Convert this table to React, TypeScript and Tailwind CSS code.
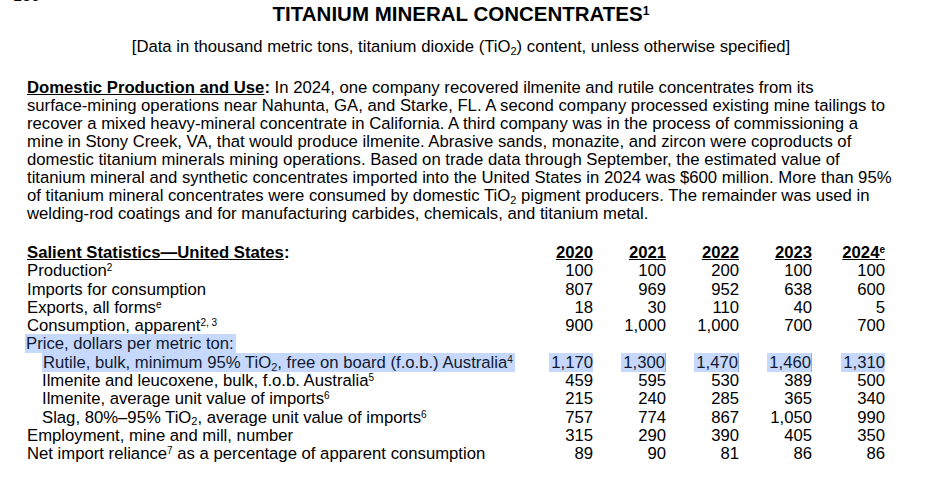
import React from 'react';

const years = ['2020', '2021', '2022', '2023', '2024'];

type Row = {
  label: React.ReactNode;
  values: string[];
  indent?: boolean;
  highlight?: boolean;
};

const rows: Row[] = [
  { label: <>Production<sup className="text-[10px]">2</sup></>, values: ['100', '100', '200', '100', '100'] },
  { label: 'Imports for consumption', values: ['807', '969', '952', '638', '600'] },
  { label: <>Exports, all forms<sup className="text-[10px]">e</sup></>, values: ['18', '30', '110', '40', '5'] },
  { label: <>Consumption, apparent<sup className="text-[10px]">2, 3</sup></>, values: ['900', '1,000', '1,000', '700', '700'] },
];

const priceRows: Row[] = [
  {
    label: (
      <>
        Rutile, bulk, minimum 95% TiO<sub className="text-[11px]">2</sub>, free on board (f.o.b.) Australia
        <sup className="text-[10px]">4</sup>
      </>
    ),
    values: ['1,170', '1,300', '1,470', '1,460', '1,310'],
    indent: true,
    highlight: true,
  },
  {
    label: <>Ilmenite and leucoxene, bulk, f.o.b. Australia<sup className="text-[10px]">5</sup></>,
    values: ['459', '595', '530', '389', '500'],
    indent: true,
  },
  {
    label: <>Ilmenite, average unit value of imports<sup className="text-[10px]">6</sup></>,
    values: ['215', '240', '285', '365', '340'],
    indent: true,
  },
  {
    label: (
      <>
        Slag, 80%–95% TiO<sub className="text-[11px]">2</sub>, average unit value of imports
        <sup className="text-[10px]">6</sup>
      </>
    ),
    values: ['757', '774', '867', '1,050', '990'],
    indent: true,
  },
  { label: 'Employment, mine and mill, number', values: ['315', '290', '390', '405', '350'] },
  {
    label: <>Net import reliance<sup className="text-[10px]">7</sup> as a percentage of apparent consumption</>,
    values: ['89', '90', '81', '86', '86'],
  },
];

const paragraph = [
  ' In 2024, one company recovered ilmenite and rutile concentrates from its',
  'surface-mining operations near Nahunta, GA, and Starke, FL. A second company processed existing mine tailings to',
  'recover a mixed heavy-mineral concentrate in California. A third company was in the process of commissioning a',
  'mine in Stony Creek, VA, that would produce ilmenite. Abrasive sands, monazite, and zircon were coproducts of',
  'domestic titanium minerals mining operations. Based on trade data through September, the estimated value of',
  'titanium mineral and synthetic concentrates imported into the United States in 2024 was $600 million. More than 95%',
];

function StatRow({ row }: { row: Row }) {
  return (
    <div className="grid grid-cols-[493px_73px_73px_73px_73px_73px] h-[18.3px]">
      <div className={row.indent ? 'pl-[15px] whitespace-nowrap' : 'whitespace-nowrap'}>
        {row.highlight ? (
          <span className="bg-[#c6d8fb] text-[#101a33] pl-[1px] pr-[2px]">{row.label}</span>
        ) : (
          row.label
        )}
      </div>
      {row.values.map((v, i) => (
        <div key={i} className="text-right">
          {row.highlight ? (
            <span
              className={
                i > 0 && i < 4
                  ? 'bg-[#c6d8fb] text-[#101a33] pl-[2px] border-r border-[#8eaef0]'
                  : 'bg-[#c6d8fb] text-[#101a33] pl-[2px]'
              }
            >
              {v}
            </span>
          ) : (
            v
          )}
        </div>
      ))}
    </div>
  );
}

export default function App() {
  return (
    <div
      className="w-[938px] h-[477px] overflow-hidden bg-white text-black"
      style={{ fontFamily: '"Liberation Sans", Arial, sans-serif' }}
    >
      <div className="-mt-[12px] ml-[13px] text-[16px] leading-[16px]">186</div>

      <div className="ml-[27px] w-[868px]">
        <h1 className="text-center text-[20.5px] font-bold leading-[22px] mt-[-1px]">
          TITANIUM MINERAL CONCENTRATES<sup className="text-[12px]">1</sup>
        </h1>

        <p className="text-center text-[16.7px] leading-[18px] mt-[13px]">
          [Data in thousand metric tons, titanium dioxide (TiO<sub className="text-[11px]">2</sub>) content, unless
          otherwise specified]
        </p>

        <div className="mt-[23px] text-[16.7px] leading-[18px] whitespace-nowrap">
          <div>
            <span className="font-bold underline">Domestic Production and Use</span>
            <span className="font-bold">:</span>
            {paragraph[0]}
          </div>
          {paragraph.slice(1).map((line, i) => (
            <div key={i}>{line}</div>
          ))}
          <div>
            of titanium mineral concentrates were consumed by domestic TiO<sub className="text-[11px]">2</sub> pigment
            producers. The remainder was used in
          </div>
          <div>welding-rod coatings and for manufacturing carbides, chemicals, and titanium metal.</div>
        </div>

        <div className="mt-[21px] text-[16.7px] leading-[18.3px]">
          <div className="grid grid-cols-[493px_73px_73px_73px_73px_73px] h-[18.3px] font-bold">
            <div>
              <span className="underline">Salient Statistics—United States</span>:
            </div>
            {years.map((y, i) => (
              <div key={y} className="text-right">
                <span className="underline">
                  {y}
                  {i === 4 && <sup className="text-[10px]">e</sup>}
                </span>
              </div>
            ))}
          </div>
          {rows.map((r, i) => (
            <StatRow key={i} row={r} />
          ))}
          <div className="h-[18.3px]">
            <span className="bg-[#c6d8fb] text-[#101a33] pl-[1px] pr-[2px] -ml-[2px]">Price, dollars per metric ton:</span>
          </div>
          {priceRows.map((r, i) => (
            <StatRow key={i} row={r} />
          ))}
        </div>
      </div>
    </div>
  );
}
